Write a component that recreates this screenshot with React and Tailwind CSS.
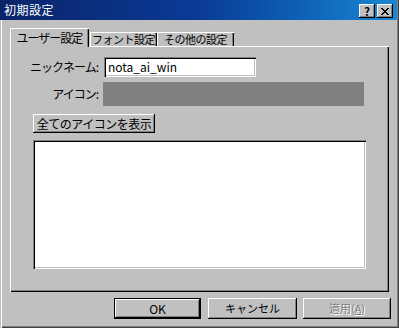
import React from 'react';

const raised = 'bg-[#c0c0c0] shadow-[inset_-1px_-1px_0_#000,inset_1px_1px_0_#fff,inset_-2px_-2px_0_#808080]';
const sunken = 'shadow-[inset_1px_1px_0_#808080,inset_2px_2px_0_#000,inset_-1px_-1px_0_#fff,inset_-2px_-2px_0_#c0c0c0]';
const tabEdge = 'shadow-[inset_1px_1px_0_#fff,inset_-1px_0_0_#000,inset_-2px_0_0_#808080]';

function TitleButton({ children }) {
  return (
    <div className={`${raised} w-[16px] h-[14px] flex items-center justify-center text-[11px] font-bold leading-none text-black`}>
      {children}
    </div>
  );
}

export default function App() {
  const font = { fontFamily: '"Noto Sans CJK JP", "Liberation Sans", sans-serif' };

  return (
    <div
      className="w-[399px] h-[328px] bg-[#c0c0c0] flex flex-col shadow-[inset_1px_0_0_#c0c0c0,inset_2px_0_0_#fff,inset_-1px_-1px_0_#404040,inset_-2px_-2px_0_#808080] text-[11px] text-black"
      style={font}
    >
      {/* title bar */}
      <div className="h-[20px] mr-[2px] flex items-center bg-gradient-to-r from-[#0a246a] via-[#0a3a96] to-[#1a86d4] pl-[4px] pr-[4px]">
        <span className="text-white text-[12px] leading-none flex-1 tracking-[0.5px]">初期設定</span>
        <div className="flex gap-[2px] pt-[2px]">
          <TitleButton>?</TitleButton>
          <TitleButton>
            <svg width="8" height="7" viewBox="0 0 8 7">
              <path d="M0 0L7 7M1 0L8 7M7 0L0 7M8 0L1 7" stroke="#000" strokeWidth="1" />
            </svg>
          </TitleButton>
        </div>
      </div>

      {/* tabs */}
      <div className="flex items-end pl-[10px] h-[26px] relative z-10">
        <div className={`${tabEdge} w-[79px] h-[19px] -mb-[1px] bg-[#c0c0c0] flex items-center justify-center leading-none text-[12px] tracking-[-1px]`}>
          ユーザー設定
        </div>
        <div className={`${tabEdge} w-[67px] h-[14px] ml-[1px] flex items-center justify-center leading-none tracking-[-0.5px]`}>
          フォント設定
        </div>
        <div className={`${tabEdge} w-[77px] h-[14px] flex items-center justify-center leading-none tracking-[-0.5px]`}>
          その他の設定
        </div>
      </div>

      {/* tab panel */}
      <div className="ml-[10px] w-[379px] h-[246px] shadow-[inset_1px_1px_0_#fff,inset_-1px_-1px_0_#000,inset_-2px_-2px_0_#808080] pt-[11px] flex flex-col">
        <div className="flex items-center h-[20px]">
          <span className="w-[88px] text-right leading-none text-[12px] tracking-[-1px]">ニックネーム:</span>
          <div className={`${sunken} ml-[6px] w-[152px] h-[20px] bg-white flex items-center pl-[4px] leading-none text-[12px]`}>
            nota_ai_win
          </div>
        </div>
        <div className="flex items-center h-[24px] mt-[5px]">
          <span className="w-[88px] text-right leading-none text-[12px] tracking-[-1px]">アイコン:</span>
          <div className="ml-[5px] w-[261px] h-[24px] bg-[#808080]" />
        </div>
        <div className={`${raised} mt-[8px] ml-[23px] w-[122px] h-[19px] flex items-center justify-center leading-none text-[12px] tracking-[-0.5px]`}>
          全てのアイコンを表示
        </div>
        <div className={`${sunken} mt-[7px] ml-[23px] w-[333px] h-[129px] bg-white`} />
      </div>

      {/* footer buttons */}
      <div className="flex justify-end pr-[8px] pt-[6px]">
        <div className={`${raised} w-[87px] h-[21px] flex items-center justify-center leading-none text-[12px] shadow-[inset_0_0_0_1px_#000,inset_-2px_-2px_0_#000,inset_2px_2px_0_#fff,inset_-3px_-3px_0_#808080]`}>
          OK
        </div>
        <div className={`${raised} ml-[7px] w-[89px] h-[21px] flex items-center justify-center leading-none`}>
          キャンセル
        </div>
        <div className={`${raised} ml-[6px] w-[88px] h-[21px] flex items-center justify-center leading-none text-[#808080] [text-shadow:1px_1px_0_#fff]`}>
          適用(<span className="underline">A</span>)
        </div>
      </div>
    </div>
  );
}
